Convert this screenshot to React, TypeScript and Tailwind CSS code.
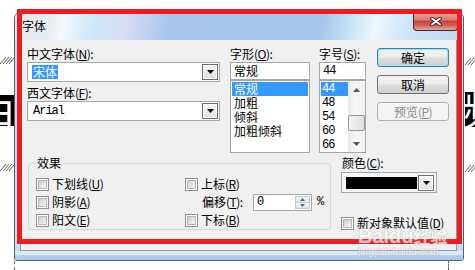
import React from "react";

const MONO = "font-['Liberation_Mono',monospace] text-[12px] tracking-[-1px]";

function Acc({ k }: { k: string }) {
  return (
    <span className="tracking-[-0.5px]">
      (<span className="underline underline-offset-[1px]">{k}</span>)
    </span>
  );
}

function DropBtn() {
  return (
    <span className="flex h-[16px] w-[16px] shrink-0 items-center justify-center border border-[#6f6f6f] bg-[linear-gradient(#f7f7f7,#dedede)] shadow-[inset_0_0_0_1px_#fff]">
      <svg width="7" height="4" viewBox="0 0 7 4">
        <path d="M0 0h7L3.5 4z" fill="#000" />
      </svg>
    </span>
  );
}

function Check({ label }: { label: React.ReactNode }) {
  return (
    <div className="flex h-[18px] items-center gap-[3px] whitespace-nowrap">
      <span className="flex h-[13px] w-[13px] shrink-0 items-center justify-center border border-[#8e8f8f] bg-white">
        <span className="h-[9px] w-[9px] border border-[#b3b6ba] bg-[linear-gradient(135deg,#cbced2,#f6f6f6)]" />
      </span>
      <span>{label}</span>
    </div>
  );
}

function Btn({ children, focus, disabled }: { children: React.ReactNode; focus?: boolean; disabled?: boolean }) {
  let cls = "border-[#707070] bg-[linear-gradient(#f2f2f2_0%,#ebebeb_48%,#dddddd_52%,#cfcfcf_100%)]";
  if (focus) cls = "border-[#3c7fb1] bg-[linear-gradient(#f2f2f2_0%,#ebebeb_48%,#dddddd_52%,#cfcfcf_100%)] shadow-[inset_0_0_0_1px_#9fe0fd]";
  if (disabled) cls = "border-[#adb2b5] bg-[#f4f4f4] text-[#8a8a8a]";
  return (
    <div className={`flex h-[19px] w-full items-center justify-center rounded-[3px] border ${cls}`}>{children}</div>
  );
}

const styles = ["常规", "加粗", "倾斜", "加粗倾斜"];
const sizes = ["44", "48", "54", "60", "66"];

export default function App() {
  return (
    <div className="relative h-[270px] w-[475px] overflow-hidden bg-white font-['SimSun','Noto_Sans_CJK_SC',sans-serif] text-[12px] leading-[14px] text-black">
      {/* document behind the dialog */}
      <div className="absolute left-0 top-[92px] h-[34px] w-[14px] overflow-hidden bg-black">
        <span className="absolute right-[-3px] top-[-5px] text-[40px] leading-none text-white">百</span>
      </div>
      <div className="absolute right-0 top-[92px] h-[35px] w-[10px] overflow-hidden bg-black">
        <span className="absolute left-[-2px] top-[-4px] text-[40px] leading-none text-white">频</span>
      </div>
      <svg className="absolute left-0 top-[57px]" width="14" height="7">
        <path d="M0 7L6 0M3 7L9 0M6 7L12 0M9 7L14 1" stroke="#333" strokeWidth="0.8" />
      </svg>
      <svg className="absolute left-0 top-[164px]" width="14" height="7">
        <path d="M0 7L6 0M3 7L9 0M6 7L12 0M9 7L14 1" stroke="#333" strokeWidth="0.8" />
      </svg>
      <svg className="absolute left-[465px] top-[58px]" width="10" height="7">
        <path d="M0 7L6 0M3 7L9 0M6 7L12 0" stroke="#333" strokeWidth="0.8" />
      </svg>
      <svg className="absolute left-[465px] top-[165px]" width="10" height="7">
        <path d="M0 7L6 0M3 7L9 0M6 7L12 0" stroke="#333" strokeWidth="0.8" />
      </svg>
      <div className="absolute left-[14px] top-[261px] h-[9px] border-l border-dashed border-[#666]" />
      <div className="absolute left-[448px] top-[260px] h-[10px] border-l border-dashed border-[#666]" />

      <div className="pl-[14px] pt-[12px]">
        <div className="flex h-[249px] w-[450px] flex-col overflow-hidden rounded-t-[6px] rounded-b-[3px] border border-[#55636f] bg-[#c8ddf2]">
          {/* title bar */}
          <div className="flex h-[27px] shrink-0 justify-between bg-[linear-gradient(100deg,#e4e9ee_0%,#e6ecf1_8%,#f4f8fb_11%,#cce7f8_18%,#d9dcf2_25%,#a9c8ec_34%,#a6c6ea_68%,#cfe9f8_76%,#eef7fc_80%,#c9e5f7_88%,#bcdcf3_100%)] pl-[7px] pr-[5px]">
            <span className="pt-[6px]">字体</span>
            <span className="flex h-[18px] w-[45px] items-center justify-center rounded-b-[4px] border border-t-0 border-[#4a2424] bg-[linear-gradient(#e9aaa2_0%,#d9776c_40%,#c8453a_50%,#cf5a50_70%,#e6a69e_100%)]">
              <svg width="12" height="9" viewBox="0 0 12 9">
                <path d="M2 1.5L10 7.5M10 1.5L2 7.5" stroke="#3b1a1a" strokeWidth="3.6" strokeLinecap="round" />
                <path d="M2 1.5L10 7.5M10 1.5L2 7.5" stroke="#fff" strokeWidth="1.8" strokeLinecap="round" />
              </svg>
            </span>
          </div>

          {/* client area */}
          <div className="ml-[5px] mr-[6px] h-[211px] shrink-0 border-x border-b border-[#8d99a6] bg-[#f0f0f0] pl-[6px] pt-[7px]">
            <div className="flex h-[106px]">
              {/* font names */}
              <div className="flex w-[193px] flex-col">
                <div className="h-[14px]">
                  中文字体<Acc k="N" />:
                </div>
                <div className="mt-[1px] flex h-[20px] items-center border border-[#a7a7a7] bg-white pl-[4px] pr-[1px]">
                  <span className="bg-[#3399ff] px-[1px] text-white">宋体</span>
                  <span className="ml-auto">
                    <DropBtn />
                  </span>
                </div>
                <div className="mt-[4px] h-[14px]">
                  西文字体<Acc k="F" />:
                </div>
                <div className="mt-[1px] flex h-[20px] items-center border border-[#a7a7a7] bg-white pl-[5px] pr-[1px]">
                  <span className={MONO}>Arial</span>
                  <span className="ml-auto">
                    <DropBtn />
                  </span>
                </div>
              </div>

              {/* style */}
              <div className="ml-[10px] flex w-[80px] flex-col">
                <div className="h-[14px]">
                  字形<Acc k="O" />:
                </div>
                <div className="mt-[1px] flex h-[18px] items-center border border-[#a7a7a7] bg-white pl-[3px]">常规</div>
                <div className="h-[73px] border border-[#a7a7a7] bg-white p-[1px]">
                  {styles.map((s, i) => (
                    <div key={s} className={`h-[14px] pl-[2px] ${i === 0 ? "bg-[#3399ff] text-white" : ""}`}>
                      {s}
                    </div>
                  ))}
                </div>
              </div>

              {/* size */}
              <div className="ml-[9px] flex w-[47px] flex-col">
                <div className="h-[14px] whitespace-nowrap">
                  字号<Acc k="S" />:
                </div>
                <div className={`mt-[1px] flex h-[18px] items-center border border-[#a7a7a7] bg-white pl-[3px] ${MONO}`}>44</div>
                <div className="flex h-[73px] border border-[#a7a7a7] bg-white">
                  <div className="flex-1 pl-[1px] pt-[1px]">
                    {sizes.map((s, i) => (
                      <div key={s} className={`h-[14px] pl-[1px] leading-[14px] ${MONO} ${i === 0 ? "bg-[#3399ff] text-white" : ""}`}>
                        {s}
                      </div>
                    ))}
                  </div>
                  <div className="flex w-[17px] flex-col bg-[linear-gradient(90deg,#e8e8e8,#f6f6f6_40%,#f0f0f0)]">
                    <div className="flex h-[17px] items-center justify-center">
                      <svg width="7" height="4" viewBox="0 0 7 4">
                        <path d="M0 4h7L3.5 0z" fill="#555" />
                      </svg>
                    </div>
                    <div className="mt-[17px] h-[16px] rounded-[2px] border border-[#979797] bg-[linear-gradient(90deg,#f4f4f4,#e0e0e0)]" />
                    <div className="mt-auto flex h-[17px] items-center justify-center">
                      <svg width="7" height="4" viewBox="0 0 7 4">
                        <path d="M0 0h7L3.5 4z" fill="#555" />
                      </svg>
                    </div>
                  </div>
                </div>
              </div>

              {/* buttons */}
              <div className="ml-[11px] flex w-[72px] flex-col gap-[8px] pt-[1px]">
                <Btn focus>确定</Btn>
                <Btn>取消</Btn>
                <Btn disabled>
                  预览<Acc k="P" />
                </Btn>
              </div>
            </div>

            <div className="mt-[3px] flex">
              <fieldset className="ml-[1px] w-[303px] rounded-[3px] border border-[#d3d7da] pb-0 pl-[7px] pt-[5px]">
                <legend className="h-[14px] px-[1px]">效果</legend>
                <div className="grid grid-cols-[149px_1fr]">
                  <Check label={<>下划线<Acc k="U" /></>} />
                  <Check label={<>上标<Acc k="R" /></>} />
                  <Check label={<>阴影<Acc k="A" /></>} />
                  <div className="flex h-[18px] items-center pl-[17px]">
                    <span className="w-[51px] whitespace-nowrap">
                      偏移<Acc k="T" />:
                    </span>
                    <span className="flex h-[17px] w-[59px] border border-[#a7a7a7] bg-white">
                      <span className={`flex-1 pl-[3px] leading-[15px] ${MONO}`}>0</span>
                      <span className="mr-[1px] flex w-[15px] flex-col py-[1px]">
                        <span className="flex flex-1 items-center justify-center border border-[#c5cbd1] bg-[linear-gradient(#f3f5f7,#dde3e8)]">
                          <svg width="5" height="3" viewBox="0 0 5 3">
                            <path d="M0 3h5L2.5 0z" fill="#4b6d9d" />
                          </svg>
                        </span>
                        <span className="flex flex-1 items-center justify-center border border-t-0 border-[#c5cbd1] bg-[linear-gradient(#f3f5f7,#dde3e8)]">
                          <svg width="5" height="3" viewBox="0 0 5 3">
                            <path d="M0 0h5L2.5 3z" fill="#4b6d9d" />
                          </svg>
                        </span>
                      </span>
                    </span>
                    <span className={`ml-[5px] ${MONO}`}>%</span>
                  </div>
                  <Check label={<>阳文<Acc k="E" /></>} />
                  <Check label={<>下标<Acc k="B" /></>} />
                </div>
              </fieldset>

              <div className="ml-[10px] flex w-[96px] flex-col">
                <div className="h-[14px] pl-[1px]">
                  颜色<Acc k="C" />:
                </div>
                <div className="mt-[2px] flex h-[21px] items-center border border-[#a7a7a7] bg-[#f7f7f7] pl-[4px] pr-[2px]">
                  <span className="mr-[1px] h-[12px] flex-1 bg-black" />
                  <DropBtn />
                </div>
                <div className="mt-[23px] flex h-[14px] items-center">
                  <Check label={<>新对象默认值<Acc k="D" /></>} />
                </div>
              </div>
            </div>
          </div>

          {/* bottom frame */}
          <div className="flex-1 bg-[linear-gradient(#dfe8f1_0%,#dfe8f1_40%,#b0cfee_50%,#a9caeb_100%)]" />
        </div>
      </div>

      {/* red annotation frame */}
      <div className="pointer-events-none absolute left-[17px] top-[9px] h-[235px] w-[445px] border-[5px] border-[#ed1c24]" />

      {/* watermark */}
      <div className="pointer-events-none absolute left-[358px] top-[226px] flex flex-col text-white opacity-70 [text-shadow:0_0_1px_#9a9a9a,0_0_1px_#9a9a9a]">
        <span className="font-['Liberation_Sans',sans-serif] text-[20px] font-bold leading-[20px]">
          Baidu<span className="font-['Noto_Sans_CJK_SC',sans-serif] text-[17px]">经验</span>
        </span>
        <span className="font-['Liberation_Sans',sans-serif] text-[10px] leading-[11px]">jingyan.baidu.com</span>
      </div>
    </div>
  );
}
